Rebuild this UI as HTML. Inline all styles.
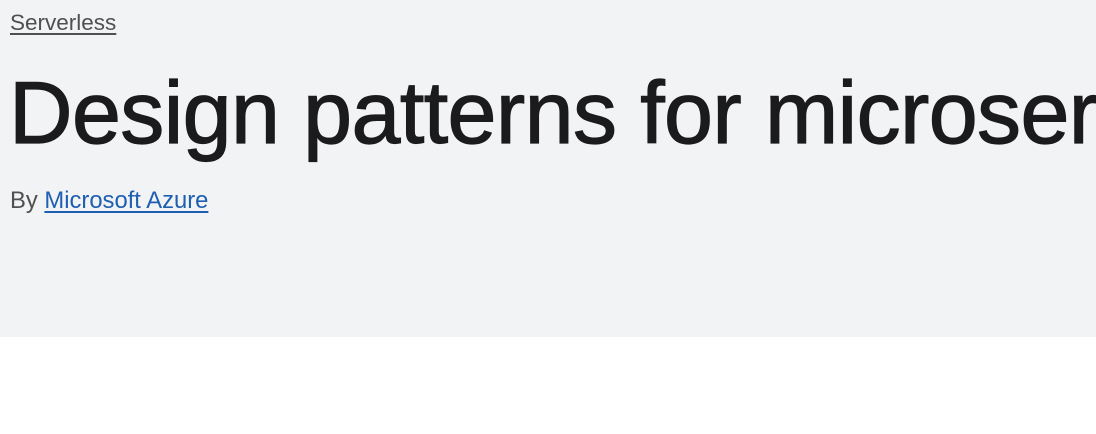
<!DOCTYPE html>
<html><head><meta charset="utf-8"><style>
html,body{margin:0;padding:0;width:1096px;height:434px;overflow:hidden;background:#fff;font-family:"Liberation Sans",sans-serif;}
.hero{position:absolute;left:0;top:0;width:1096px;height:337px;background:#f2f3f5;overflow:hidden;}
.crumb{position:absolute;left:10px;top:10px;font-size:22.5px;color:#505050;text-decoration:underline;text-underline-offset:3px;}
h1{position:absolute;left:9px;top:63px;margin:0;font-size:88px;line-height:100px;font-weight:normal;color:#1b1b1d;white-space:nowrap;-webkit-text-stroke:1.2px #1b1b1d;letter-spacing:-0.6px;}
.by{position:absolute;left:10px;top:187px;font-size:23.8px;color:#505050;}
.by a{color:#1d5fb0;text-decoration:underline;text-underline-offset:3px;}
</style></head><body>
<div class="hero">
<div class="crumb">Serverless</div>
<h1>Design patterns for microservices</h1>
<div class="by">By <a>Microsoft Azure</a></div>
</div>
</body></html>
